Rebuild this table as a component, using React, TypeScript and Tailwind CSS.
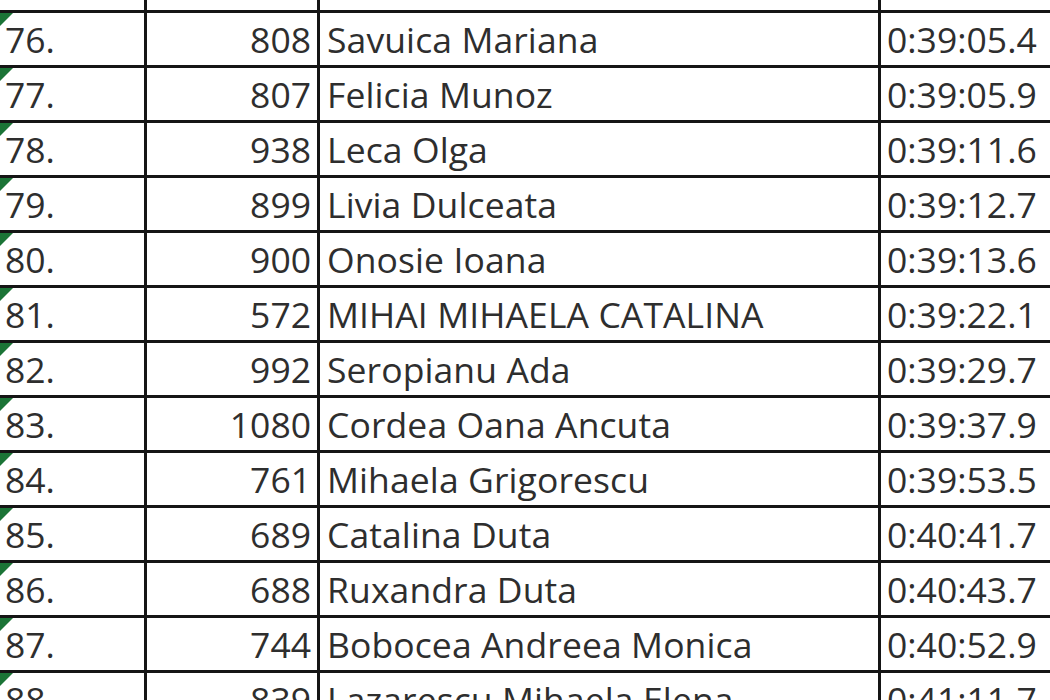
const rows = [
  { pos: "76.", bib: "808", name: "Savuica Mariana", time: "0:39:05.4" },
  { pos: "77.", bib: "807", name: "Felicia Munoz", time: "0:39:05.9" },
  { pos: "78.", bib: "938", name: "Leca Olga", time: "0:39:11.6" },
  { pos: "79.", bib: "899", name: "Livia Dulceata", time: "0:39:12.7" },
  { pos: "80.", bib: "900", name: "Onosie Ioana", time: "0:39:13.6" },
  { pos: "81.", bib: "572", name: "MIHAI MIHAELA CATALINA", time: "0:39:22.1" },
  { pos: "82.", bib: "992", name: "Seropianu Ada", time: "0:39:29.7" },
  { pos: "83.", bib: "1080", name: "Cordea Oana Ancuta", time: "0:39:37.9" },
  { pos: "84.", bib: "761", name: "Mihaela Grigorescu", time: "0:39:53.5" },
  { pos: "85.", bib: "689", name: "Catalina Duta", time: "0:40:41.7" },
  { pos: "86.", bib: "688", name: "Ruxandra Duta", time: "0:40:43.7" },
  { pos: "87.", bib: "744", name: "Bobocea Andreea Monica", time: "0:40:52.9" },
  { pos: "88.", bib: "839", name: "Lazarescu Mihaela Elena", time: "0:41:11.7" },
];

const cols = "grid grid-cols-[144px_170px_558px_1fr] gap-x-[3px] shrink-0";
const cell = "bg-white h-[52px] flex items-end overflow-hidden whitespace-nowrap";

function Row({ r }: { r: (typeof rows)[number] }) {
  return (
    <div className={cols}>
      <div className={`${cell} relative pl-[5px]`}>
        <div className="absolute left-0 top-0 w-0 h-0 border-t-[13px] border-r-[13px] border-t-[#1b7436] border-r-transparent" />
        <span className="pb-[8px]">{r.pos}</span>
      </div>
      <div className={`${cell} justify-end pr-[6px]`}>
        <span className="pb-[8px]">{r.bib}</span>
      </div>
      <div className={`${cell} pl-[7px]`}>
        <span className="pb-[8px] tracking-[0.1px]">{r.name}</span>
      </div>
      <div className={`${cell} pl-[6px]`}>
        <span className="pb-[8px]">{r.time}</span>
      </div>
    </div>
  );
}

export default function App() {
  return (
    <div className="w-[1050px] h-[700px] overflow-hidden bg-[#151515] flex flex-col gap-y-[3px] text-[35.5px] leading-none text-[#2e2e2e] font-['Open_Sans',sans-serif]">
      <div className={cols}>
        <div className="bg-white h-[10px]" />
        <div className="bg-white h-[10px]" />
        <div className="bg-white h-[10px]" />
        <div className="bg-white h-[10px]" />
      </div>
      {rows.map((r) => (
        <Row key={r.pos} r={r} />
      ))}
    </div>
  );
}
